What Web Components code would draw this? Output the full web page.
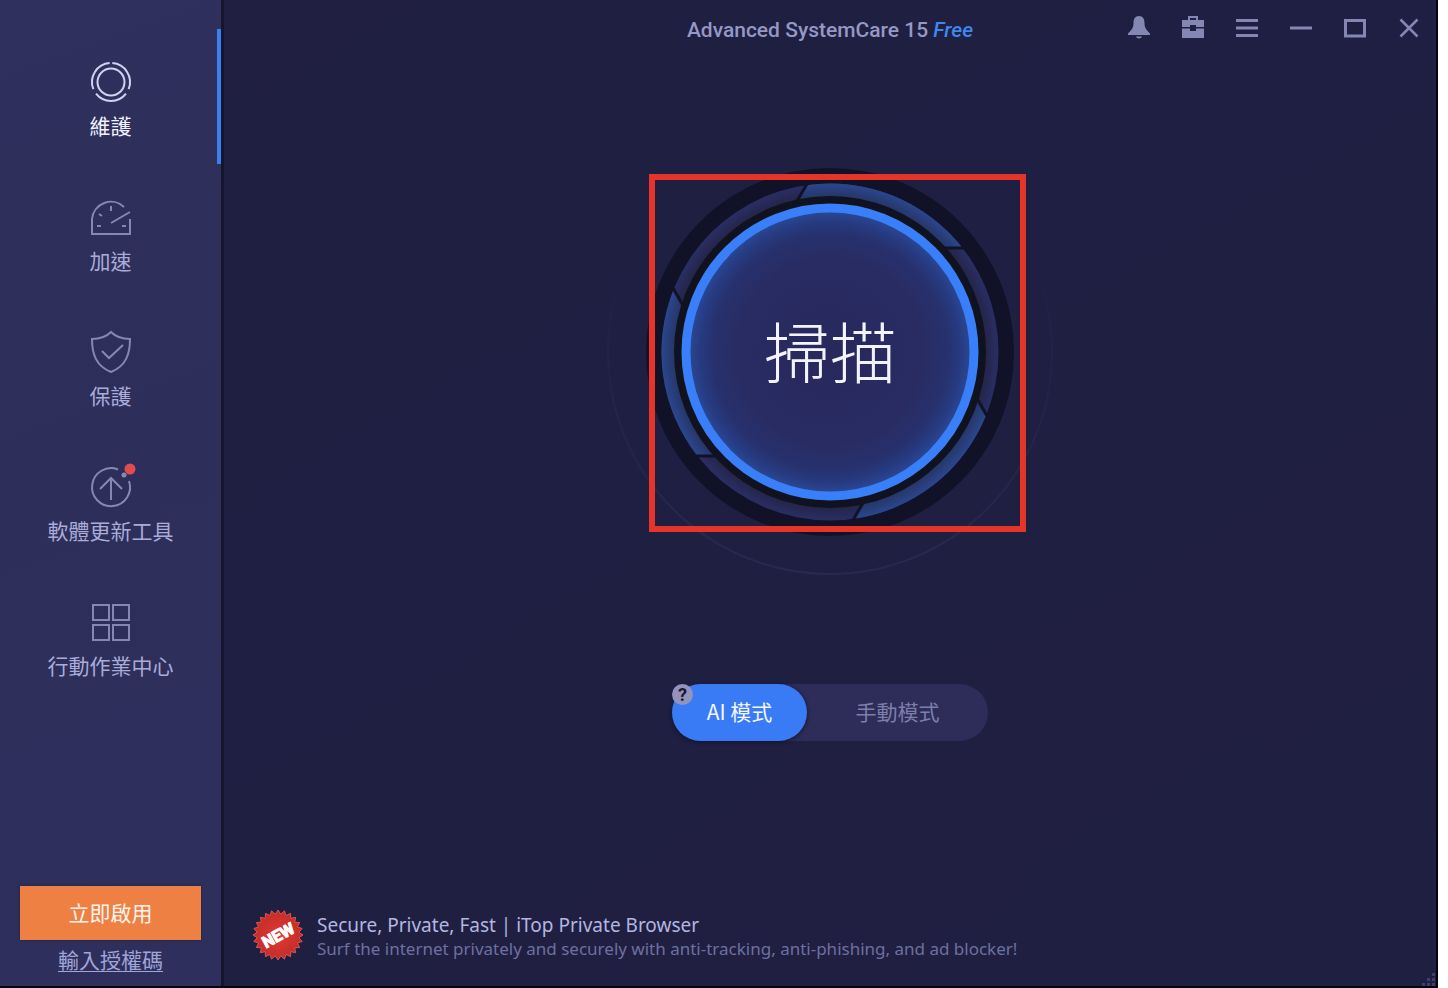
<!DOCTYPE html>
<html lang="zh-Hant">
<head>
<meta charset="utf-8">
<title>Advanced SystemCare 15 Free</title>
<style>
  html, body { margin: 0; height: 100%; background: #fff; }
  body { font-family: Roboto, "Noto Sans CJK TC", sans-serif; }
</style>
</head>
<body>
<care-app></care-app>

<template id="care-app">
  <style>
    :host { display: flex; box-sizing: border-box; min-height: 100vh; margin-right: 10px;
      background: #1f1f42; border-right: 2px solid #05050d; border-bottom: 2px solid #05050d; }
    main { position: relative; flex: 1; display: flex; flex-direction: column; align-items: center;
      background: linear-gradient(150deg, #201f41 0%, #1e1f42 40%, #201f41 70%, #1f1f42 100%); }
    care-titlebar { align-self: stretch; }
    care-scan { margin-top: 66px; }
    care-modes { margin-top: 102px; }
    care-promo { align-self: stretch; margin-top: auto; }
    .grip { position: absolute; right: 0; bottom: 0; width: 14px; height: 14px; }
  </style>
  <care-sidebar>
    <care-nav-item icon="care" active>維護</care-nav-item>
    <care-nav-item icon="speed">加速</care-nav-item>
    <care-nav-item icon="protect">保護</care-nav-item>
    <care-nav-item icon="update">軟體更新工具</care-nav-item>
    <care-nav-item icon="center">行動作業中心</care-nav-item>
  </care-sidebar>
  <main>
    <care-titlebar>Advanced SystemCare 15 <em slot="edition">Free</em></care-titlebar>
    <care-scan>掃描</care-scan>
    <care-modes></care-modes>
    <care-promo>
      <span slot="headline">Secure, Private, Fast | iTop Private Browser</span>
      <span slot="detail">Surf the internet privately and securely with anti-tracking, anti-phishing, and ad blocker!</span>
    </care-promo>
    <svg class="grip" viewBox="0 0 14 14" fill="#3f3f69" aria-hidden="true"><path d="M10 1h3v3h-3zM10 6h3v3h-3zM5 6h3v3H5zM10 11h3v3h-3zM5 11h3v3H5zM0 11h3v3H0z"/></svg>
  </main>
</template>

<template id="care-sidebar">
  <style>
    :host { flex: none; display: flex; flex-direction: column; width: 221px;
      background: linear-gradient(160deg, #30305e, #2e2e5a 45%, #2f2f5e); border-right: 3px solid #151530; }
    nav { padding-top: 29px; flex: 1; }
    .licence { display: flex; flex-direction: column; align-items: center; padding: 0 20px 12px; }
    button { align-self: stretch; height: 54px; padding: 0 0 3px; border: 0; background: #ee8044; color: #fff5ec;
      font: 21px/30px "Noto Sans CJK TC", sans-serif; box-shadow: 0 0 2px #1d1d40; }
    a { margin-top: 4px; color: #a0a5d6; font: 21px/30px "Noto Sans CJK TC", sans-serif;
      text-decoration: underline; text-underline-offset: 3px; text-decoration-thickness: 1px; }
  </style>
  <nav><slot></slot></nav>
  <div class="licence">
    <button type="button">立即啟用</button>
    <a href="#license">輸入授權碼</a>
  </div>
</template>

<template id="care-nav-item">
  <style>
    :host { display: block; height: 135px; color: #a9acd8; --line: #8587b4; }
    :host([active]) { color: #f1f2ff; --line: #d0d2f2; box-shadow: inset -4px 0 #3b7ff0; }
    a { display: flex; flex-direction: column; align-items: center; gap: 4px; height: 100%;
      box-sizing: border-box; padding-top: 29px; color: inherit; text-decoration: none;
      font: 21px/30px "Noto Sans CJK TC", sans-serif; }
    svg { width: 48px; height: 48px; fill: none; stroke: var(--line); stroke-width: 2; overflow: visible; }
  </style>
  <a href="#"><svg viewBox="-24 -24 48 48" aria-hidden="true"></svg><span><slot></slot></span></a>
</template>

<template id="care-titlebar">
  <style>
    :host { display: grid; grid-template-columns: 1fr auto 1fr; align-items: center; height: 56px; }
    h1 { grid-column: 2; margin: 0; padding-top: 4px; color: #9698c4; font: 500 21px/28px Roboto, sans-serif; white-space: nowrap; }
    ::slotted(em) { color: #3f87ee; font-style: italic; }
    .tools { display: flex; justify-content: flex-end; }
    button { width: 54px; height: 56px; padding: 0; border: 0; background: none; color: #8486b4; }
    svg { display: block; width: 24px; height: 24px; margin: 0 auto; fill: none; stroke: currentColor; stroke-width: 3; }
    .solid { fill: currentColor; stroke: none; }
  </style>
  <h1><slot></slot><slot name="edition"></slot></h1>
  <div class="tools">
    <button type="button" aria-label="通知"><svg class="solid" viewBox="0 0 24 24"><path d="M12 0C8 0 6.500 3 6.500 7C6.500 12 4.500 14 1 17.500V19H23V17.500C19.500 14 17.500 12 17.500 7C17.500 3 16 0 12 0ZM9 20.500H15C14.500 23 9.500 23 9 20.500Z"/></svg></button>
    <button type="button" aria-label="工具箱"><svg class="solid" viewBox="0 0 24 24"><path fill-rule="evenodd" d="M7 4V0H17V4H23V11H15V9H9V11H1V4ZM9 4H15V2H9ZM1 12.500H9V15H15V12.500H23V22H1Z"/></svg></button>
    <button type="button" aria-label="選單"><svg viewBox="0 0 24 24"><path d="M1 4.500H23M1 12H23M1 19.500H23"/></svg></button>
    <button type="button" aria-label="最小化"><svg viewBox="0 0 24 24"><path d="M1 12H23"/></svg></button>
    <button type="button" aria-label="最大化"><svg viewBox="0 0 24 24"><path d="M2.500 4.500H21.500V20H2.500Z"/></svg></button>
    <button type="button" aria-label="關閉"><svg viewBox="0 0 24 24"><path d="M3.500 3.500L20.500 20.500M20.500 3.500L3.500 20.500" stroke-width="2.500"/></svg></button>
  </div>
</template>

<template id="care-scan">
  <style>
    :host { display: block; position: relative; width: 460px; height: 460px; }
    button { display: grid; place-items: center; width: 100%; height: 100%; padding: 0; border: 0; background: none; color: #f3f4ff; }
    svg, span { grid-area: 1 / 1; }
    svg { width: 460px; height: 460px; overflow: visible; }
    span { padding-bottom: 6px; font: 300 66px/80px "Noto Sans CJK TC", sans-serif; }
    .frame { position: absolute; left: 49px; top: 52px; width: 365px; height: 346px; border: 6px solid #e63528; pointer-events: none; }
  </style>
  <button type="button">
    <svg viewBox="-230 -230 460 460" aria-hidden="true">
      <defs>
        <radialGradient id="glow">
          <stop offset="0" stop-color="#28285c"/><stop offset=".65" stop-color="#282c63"/>
          <stop offset=".82" stop-color="#27316e"/><stop offset=".91" stop-color="#273b82"/><stop offset="1" stop-color="#2a4c9c"/>
        </radialGradient>
        <linearGradient id="orbit" x1="0" y1="0" x2="0" y2="1">
          <stop offset=".3" stop-color="#27284d" stop-opacity="0"/><stop offset=".6" stop-color="#27284d" stop-opacity=".5"/>
          <stop offset="1" stop-color="#28294f"/>
        </linearGradient>
        <radialGradient id="blade" gradientUnits="userSpaceOnUse" cx="0" cy="0" r="169">
          <stop offset=".92" stop-color="#263668"/><stop offset="1" stop-color="#2a478f"/>
        </radialGradient>
        <radialGradient id="band" gradientUnits="userSpaceOnUse" cx="0" cy="0" r="169">
          <stop offset=".92" stop-color="#242549"/><stop offset="1" stop-color="#2a2e66"/>
        </radialGradient>
      </defs>
      <circle r="222" fill="none" stroke="url(#orbit)" stroke-width="2"/>
      <circle r="184" fill="#111127"/>
      <circle r="168.500" fill="url(#band)"/>
      <g class="arcs" fill="url(#blade)"></g>
      <g class="cuts" stroke="#111127" stroke-width="3"></g>
      <circle r="156" fill="#11121f"/>
      <circle r="144" fill="url(#glow)" stroke="#397ffa" stroke-width="9"/>
    </svg>
    <span><slot></slot></span>
  </button>
  <div class="frame"></div>
</template>

<template id="care-modes">
  <style>
    :host { display: block; position: relative; }
    .track { display: grid; grid-template-columns: 135px 181px; height: 57px; border-radius: 29px; background: #2e2d5a; }
    button { border: 0; padding: 0 0 3px; border-radius: 29px; background: none; color: #7d7faa;
      font: 21px/30px "Noto Sans CJK TC", sans-serif; }
    .on { background: #397bf5; color: #f5f8ff; box-shadow: 0 1px 4px #11112c; }
    .help { position: absolute; left: 0; top: 0; width: 21px; height: 21px; padding: 0; border-radius: 50%;
      background: #9294bd; color: #17172f; font: 700 18px/21px Roboto, sans-serif; }
  </style>
  <div class="track">
    <button type="button" class="on" aria-pressed="true">AI 模式</button>
    <button type="button" aria-pressed="false">手動模式</button>
  </div>
  <button type="button" class="help">?</button>
</template>

<template id="care-promo">
  <style>
    :host { display: block; }
    a { display: flex; align-items: center; gap: 13px; padding: 0 28px 25px; color: inherit; text-decoration: none; }
    svg { flex: none; width: 52px; height: 52px; }
    text { font: 700 16px Roboto, sans-serif; fill: #fff; stroke: #fff; stroke-width: 1px; }
    .copy { display: flex; flex-direction: column; padding-top: 3px; font-family: "Noto Sans", sans-serif; white-space: nowrap; }
    .head { color: #b3b6e0; font-size: 19px; line-height: 24px; }
    .detail { color: #6d70a0; font-size: 17px; line-height: 24px; }
  </style>
  <a href="#browser">
    <svg viewBox="-26 -26 52 52" aria-hidden="true">
      <defs><radialGradient id="seal"><stop offset="0" stop-color="#e03a34"/><stop offset="1" stop-color="#c42c28"/></radialGradient></defs>
      <polygon class="seal" fill="url(#seal)" stroke="#d8564e" stroke-width="1"/>
      <text text-anchor="middle" y="6" transform="rotate(-29)">NEW</text>
    </svg>
    <span class="copy">
      <span class="head"><slot name="headline"></slot></span>
      <span class="detail"><slot name="detail"></slot></span>
    </span>
  </a>
</template>

<script>
  class CareElement extends HTMLElement {
    constructor() {
      super();
      this.attachShadow({ mode: 'open' })
        .append(document.getElementById(this.localName).content.cloneNode(true));
    }
  }

  const polar = (radius, degrees) => {
    const a = (degrees - 90) * Math.PI / 180;
    return (radius * Math.cos(a)).toFixed(2) + ' ' + (radius * Math.sin(a)).toFixed(2);
  };

  const ICONS = {
    care: '<circle r="13.500"/><path d="' +
      [[4, 112], [128, 232], [248, 356]].map(([a, b]) => `M${polar(19, a)}A19 19 0 0 1 ${polar(19, b)}`).join('') + '"/>',
    speed: '<path d="M13 -9A19 19 0 0 0 -19 3V18H19V3M0 7L19 -4M0 -10V-5M-12 -2L-9 0M-14 10H-10M11 10H15" transform="translate(0 -1)"/>',
    protect: '<path d="M0 -20C-5 -15 -12 -13 -19 -13C-19 2 -15 14 0 20C15 14 19 2 19 -13C12 -13 5 -15 0 -20ZM-9 -1L-2 6L12 -7"/>',
    update: '<path d="M7 -17.500A19 19 0 1 0 18 -6M0 13V-8M-11 2L0 -9L11 2"/><circle cx="13" cy="-12" r="2.500" fill="var(--line)" stroke="none"/><circle cx="19" cy="-18" r="5.500" fill="#e04c50" stroke="none"/>',
    center: '<path d="M-18 -17H-2V-2H-18ZM2 -17H18V-2H2ZM-18 3H-2V18H-18ZM2 3H18V18H2Z"/>'
  };

  customElements.define('care-nav-item', class extends CareElement {
    connectedCallback() {
      this.shadowRoot.querySelector('svg').innerHTML = ICONS[this.getAttribute('icon')];
    }
  });

  customElements.define('care-scan', class extends CareElement {
    connectedCallback() {
      const root = this.shadowRoot;
      root.querySelector('.arcs').innerHTML = [0, 120, 240]
        .map(a => `<path d="M${polar(168.5, a - 8)}A168.500 168.500 0 0 1 ${polar(168.5, a + 52)}L${polar(155, a + 48)}A155 155 0 0 0 ${polar(155, a - 12)}Z"/>`).join('');
      root.querySelector('.cuts').innerHTML = [0, 60, 120, 180, 240, 300]
        .map(a => `<path d="M-23 -168L-33 -151" transform="rotate(${a})"/>`).join('');
    }
  });

  customElements.define('care-promo', class extends CareElement {
    connectedCallback() {
      const points = Array.from({ length: 48 }, (_, i) => polar(i % 2 ? 21 : 25, i * 7.5));
      this.shadowRoot.querySelector('.seal').setAttribute('points', points.join(' '));
    }
  });

  for (const name of ['care-sidebar', 'care-titlebar', 'care-modes', 'care-app']) {
    customElements.define(name, class extends CareElement {});
  }
</script>
</body>
</html>
